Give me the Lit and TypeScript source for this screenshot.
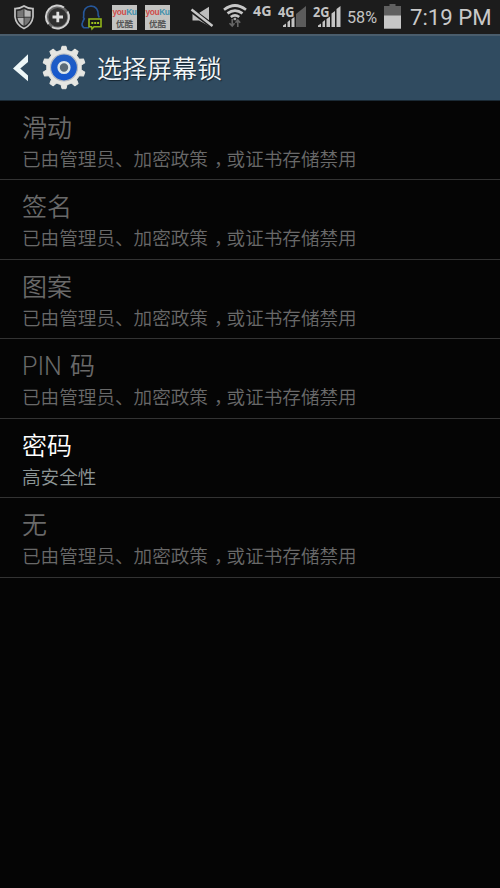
import { LitElement, html, css, svg } from "lit";
import { customElement, property } from "lit/decorators.js";

interface LockOption {
  title: string;
  enabled?: boolean;
}

const OPTIONS: LockOption[] = [
  { title: "滑动" },
  { title: "签名" },
  { title: "图案" },
  { title: "PIN 码" },
  { title: "密码", enabled: true },
  { title: "无" },
];

const TEETH = Array.from({ length: 10 }, (_, i) => i * 36);

@customElement("status-bar")
class StatusBar extends LitElement {
  static styles = css`
    :host {
      display: flex;
      height: 34px;
      background: #1c1c1c;
      color: #c4c4c4;
      font-family: Roboto, "Noto Sans CJK SC", sans-serif;
      white-space: nowrap;
    }
    svg { display: block; flex: none; height: 35px; overflow: visible; }
    .shield { width: 20px; margin-left: 14px; }
    .plus { width: 26px; margin-left: 11px; }
    .head { width: 22px; margin-left: 10px; }
    .youku {
      flex: none;
      width: 25px;
      height: 25px;
      margin: 5px 0 0 9px;
      background: #c3c3c1;
      text-align: center;
      color: #555;
    }
    .youku + .youku { margin-left: 8px; }
    .brand {
      height: 12px;
      padding-top: 1px;
      font: 700 8.4px/13px "Liberation Sans", sans-serif;
      letter-spacing: -0.4px;
      color: #d04b48;
    }
    .brand b { color: #4291ad; }
    .cn { font: 700 8.5px/10px "Noto Sans CJK SC", sans-serif; }
    .mute { width: 23px; margin-left: 21px; }
    .wifi { width: 24px; margin-left: 9px; }
    .net { width: 19px; margin-left: 6px; font: 700 14.3px/22px "Noto Sans", sans-serif; }
    .sig { width: 29px; margin-left: 6px; }
    .sig text { font: 700 13.5px "Noto Sans", sans-serif; fill: #c4c4c4; }
    .pct { width: 30px; margin-left: 5px; font-size: 16.2px; line-height: 35px; }
    .battery { width: 17px; margin-left: 7px; }
    .time { margin-left: 9px; font-size: 22.2px; line-height: 34px; color: #c9c9c9; }
  `;

  private signal(label: string, weak: boolean) {
    return html`<svg class="sig" viewBox="0 0 29 35">
      <text x="0" y="16.5" textLength="16.5" lengthAdjust="spacingAndGlyphs">${label}</text>
      ${weak
        ? svg`<path fill="#5c5c5c" d="M18 14 28 6V27H18Z"/><path fill="#c4c4c4" d="M5 25.5 8 23.5V27H5ZM9.5 22 12 20V27H9.5ZM13.5 19 16.5 17V27H13.5Z"/>`
        : svg`<path fill="#c4c4c4" d="M5 25.5 8 23.5V27H5ZM9.5 22 12 20V27H9.5ZM13.5 19 17 16.5V27H13.5ZM18.5 13.5 22 11V27H18.5ZM23.5 9 27.5 6V27H23.5Z"/>`}
    </svg>`;
  }

  render() {
    return html`
      <svg class="shield" viewBox="0 0 20 35">
        <path d="M10 6Q14 8.7 19 8.6V17Q18 25 10 28.5 2 25 1 17V8.6Q6 8.7 10 6Z" fill="#272727" stroke="#c4c4c4" stroke-width="1.7"/>
        <path d="M9.6 9V17H3.3V11Q7 10.8 9.6 9ZM10.4 17.5H16.7Q16 22.8 10.4 25.8Z" fill="#777"/>
        <path d="M10.4 9Q13 10.8 16.7 11V16.7H10.4ZM9.6 17.7H3.5Q4.3 23 9.6 25.8Z" fill="#b4b4b4"/>
      </svg>
      <svg class="plus" viewBox="0 0 26 35">
        <circle cx="12.8" cy="17.3" r="10.6" fill="#303030" stroke="#666" stroke-width="2.6"/>
        <path d="M3.5 24.2A11.5 11.5 0 0 1 19 7.5M22.5 11.5A11.5 11.5 0 0 1 7 27.2" fill="none" stroke="#d0d0d0" stroke-width="2"/>
        <path d="M12.8 11.8V22.3M7.5 17H18" stroke="#e0e0e0" stroke-width="2.8"/>
      </svg>
      <svg class="head" viewBox="0 0 22 35">
        <path d="M8 27.8H3Q0 25.5 1.5 22.5 2.5 20 3.3 18.8 2 17.5 2.7 15.8 2 6.5 10 6 17.7 6.5 17.2 15.5L18.3 17.5" fill="none" stroke="#26579a" stroke-width="1.6"/>
        <path d="M8 19H20V26.7H13L11 28.8 10.5 26.7H8Z" fill="#191919" stroke="#91b51a" stroke-width="1.6"/>
        <path d="M10.3 22h2v2h-2zM13.2 22h2v2h-2zM16.1 22h2v2h-2z" fill="#a0c51f"/>
      </svg>
      ${[0, 1].map(() => html`<div class="youku"><div class="brand">you<b>Ku</b></div><div class="cn">优酷</div></div>`)}
      <svg class="mute" viewBox="0 0 23 35">
        <path d="M1.5 13H8L18 6.8V26L8 20.5H1.5Z" fill="#bdbdbd"/>
        <path d="M-1 9 22 26.5" stroke="#1c1c1c" stroke-width="5"/>
        <path d="M.5 9.5 21.5 26" stroke="#c7c7c7" stroke-width="2.5"/>
      </svg>
      <svg class="wifi" viewBox="0 0 24 35">
        <g fill="none" stroke="#c7c7c7" stroke-width="2.7">
          <path d="M1 9.7Q12 1.3 23 9.7"/>
          <path d="M4.5 13.4Q12 7.7 19.5 13.4"/>
          <path d="M7.8 17Q12 13.8 16.2 17"/>
        </g>
        <path d="M10.6 17.8h2.6v2.4h-2.6z" fill="#aaa"/>
        <path d="M9.2 19V26M6.5 23.3 9.2 26 11.5 23.3M14.8 27V20M12.5 22.7 14.8 20 17.2 22.7" fill="none" stroke="#666" stroke-width="1.6"/>
      </svg>
      <div class="net">4G</div>
      ${this.signal("4G", true)}
      ${this.signal("2G", false)}
      <div class="pct">58%</div>
      <svg class="battery" viewBox="0 0 17 35">
        <path d="M0 6H5.5V4H11.5V6H17V16H0Z" fill="#606060"/>
        <path d="M0 15.5H17V28.7H0Z" fill="#c7c7c7"/>
      </svg>
      <div class="time">7:19 PM</div>
    `;
  }
}

@customElement("title-bar")
class TitleBar extends LitElement {
  static styles = css`
    :host {
      display: flex;
      box-sizing: border-box;
      height: 66.5px;
      border-top: 2px solid #4a5d6c;
      border-bottom: 1px solid #1b2a35;
      background: #304b60;
    }
    .back { display: block; width: 17px; height: 62px; margin: 1px 0 0 12px; }
    .gear { display: block; width: 44px; height: 62px; margin: 1px 0 0 13px; }
    .title {
      margin-left: 11px;
      font: 350 25px/62px "Noto Sans CJK SC", sans-serif;
      color: #f2f6f8;
      text-shadow: 1px 1px 1px #15242f;
    }
  `;

  render() {
    return html`
      <svg class="back" viewBox="0 0 17 62">
        <path d="M16 17.3V25L8.3 31.5 16 38.5V44.3L1 31.5Z" fill="#eef7f8"/>
      </svg>
      <svg class="gear" viewBox="0 0 44 62">
        <defs>
          <linearGradient id="blue" x1="0" y1="0" x2="0" y2="1">
            <stop offset="0" stop-color="#235fc2"/><stop offset="1" stop-color="#1456cf"/>
          </linearGradient>
        </defs>
        <g fill="#e6e6e2" stroke="#e6e6e2" stroke-width="1" stroke-linejoin="round">
          ${TEETH.map((a) => svg`<path transform="rotate(${a} 22 30.5)" d="M18.8 14 20 9.3H24L25.2 14Z"/>`)}
          <circle cx="22" cy="30.5" r="17.3"/>
        </g>
        <circle cx="22" cy="30.5" r="13.5" fill="url(#blue)" stroke="#b4bac2" stroke-width="1.2"/>
        <circle cx="22" cy="30.5" r="5.4" fill="#5b6a76" stroke="#dde5e8" stroke-width="2.4"/>
      </svg>
      <div class="title">选择屏幕锁</div>
    `;
  }
}

@customElement("lock-row")
class LockRow extends LitElement {
  @property() heading = "";
  @property({ type: Boolean, reflect: true }) enabled = false;

  static styles = css`
    :host {
      display: block;
      box-sizing: border-box;
      height: 79.5px;
      padding: 9px 22px 0;
      border-bottom: 1px solid #333;
      color: #696969;
      font-family: Roboto, "Noto Sans CJK SC", sans-serif;
      font-weight: 350;
      white-space: nowrap;
    }
    .heading { font-size: 25px; line-height: 37px; word-spacing: 2px; }
    .summary { font-size: 18.6px; line-height: 26px; }
    .comma { padding: 0 3.3px 0 6px; font-feature-settings: "halt"; }
    :host([enabled]) .heading { color: #fff; }
    :host([enabled]) .summary { color: #8d9696; }
  `;

  render() {
    return html`
      <div class="heading">${this.heading}</div>
      <div class="summary">
        ${this.enabled ? "高安全性" : html`已由管理员、加密政策<span class="comma">，</span>或证书存储禁用`}
      </div>
    `;
  }
}

@customElement("app-root")
class AppRoot extends LitElement {
  static styles = css`
    :host {
      display: block;
      width: 500px;
      height: 888px;
      overflow: hidden;
      background: #050505;
    }
  `;

  render() {
    return html`
      <status-bar></status-bar>
      <title-bar></title-bar>
      <main>${OPTIONS.map((o) => html`<lock-row .heading=${o.title} .enabled=${!!o.enabled}></lock-row>`)}</main>
    `;
  }
}
